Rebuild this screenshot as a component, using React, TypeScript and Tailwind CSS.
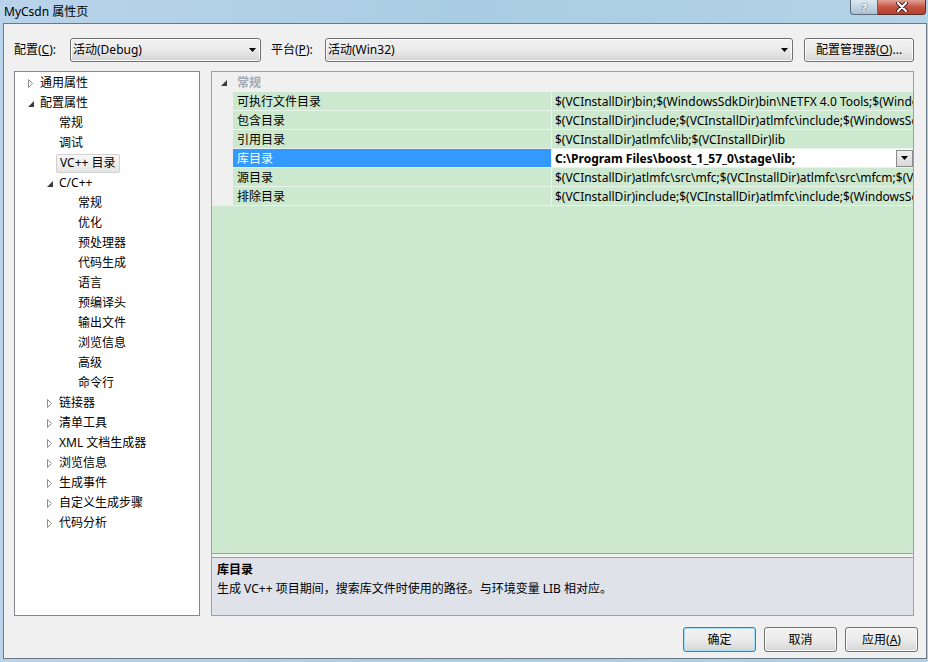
import type { ReactNode } from 'react';

type Arrow = 'open' | 'closed' | undefined;

interface TreeNode {
  label: string;
  level: 0 | 1 | 2;
  arrow?: Arrow;
  selected?: boolean;
}

const tree: TreeNode[] = [
  { label: '通用属性', level: 0, arrow: 'closed' },
  { label: '配置属性', level: 0, arrow: 'open' },
  { label: '常规', level: 1 },
  { label: '调试', level: 1 },
  { label: 'VC++ 目录', level: 1, selected: true },
  { label: 'C/C++', level: 1, arrow: 'open' },
  { label: '常规', level: 2 },
  { label: '优化', level: 2 },
  { label: '预处理器', level: 2 },
  { label: '代码生成', level: 2 },
  { label: '语言', level: 2 },
  { label: '预编译头', level: 2 },
  { label: '输出文件', level: 2 },
  { label: '浏览信息', level: 2 },
  { label: '高级', level: 2 },
  { label: '命令行', level: 2 },
  { label: '链接器', level: 1, arrow: 'closed' },
  { label: '清单工具', level: 1, arrow: 'closed' },
  { label: 'XML 文档生成器', level: 1, arrow: 'closed' },
  { label: '浏览信息', level: 1, arrow: 'closed' },
  { label: '生成事件', level: 1, arrow: 'closed' },
  { label: '自定义生成步骤', level: 1, arrow: 'closed' },
  { label: '代码分析', level: 1, arrow: 'closed' },
];

const indent = ['pl-[9px]', 'pl-[28px]', 'pl-[47px]'];

const props = [
  {
    name: '可执行文件目录',
    value: '$(VCInstallDir)bin;$(WindowsSdkDir)bin\\NETFX 4.0 Tools;$(WindowsSdkDir)bin;$(VSInstallDir)Common7\\Tools\\bin;',
  },
  {
    name: '包含目录',
    value: '$(VCInstallDir)include;$(VCInstallDir)atlmfc\\include;$(WindowsSdkDir)include;$(FrameworkSDKDir)\\include;',
  },
  { name: '引用目录', value: '$(VCInstallDir)atlmfc\\lib;$(VCInstallDir)lib' },
  { name: '库目录', value: 'C:\\Program Files\\boost_1_57_0\\stage\\lib;', selected: true },
  {
    name: '源目录',
    value: '$(VCInstallDir)atlmfc\\src\\mfc;$(VCInstallDir)atlmfc\\src\\mfcm;$(VCInstallDir)atlmfc\\src\\atl;',
  },
  {
    name: '排除目录',
    value: '$(VCInstallDir)include;$(VCInstallDir)atlmfc\\include;$(WindowsSdkDir)include;$(FrameworkSDKDir)\\include;',
  },
];

function TreeArrow({ kind }: { kind: Arrow }) {
  if (kind === 'closed') {
    return (
      <svg width="7" height="9" viewBox="0 0 7 9">
        <path d="M1.5 0.5 L5.5 4.5 L1.5 8.5 Z" fill="#fff" stroke="#8e8f8f" strokeWidth="1" />
      </svg>
    );
  }
  if (kind === 'open') {
    return (
      <svg width="6" height="6" viewBox="0 0 6 6" className="mt-[1px]">
        <path d="M6 0 L6 6 L0 6 Z" fill="#3b3b3b" />
      </svg>
    );
  }
  return null;
}

function DownArrow() {
  return (
    <svg width="7" height="4" viewBox="0 0 7 4">
      <path d="M0 0 L7 0 L3.5 4 Z" fill="#000" />
    </svg>
  );
}

function Combo({ text, width }: { text: string; width: string }) {
  return (
    <div
      className={`${width} h-[24px] rounded-[3px] border border-[#707070] bg-gradient-to-b from-[#f2f2f2] via-[#eaeaea] to-[#d4d4d4] shadow-[inset_0_0_0_1px_#fbfbfb] flex items-center pl-[2px] pr-[4px]`}
    >
      <span className="flex-1">{text}</span>
      <DownArrow />
    </div>
  );
}

function WinButton({ children, focused, width }: { children: ReactNode; focused?: boolean; width: string }) {
  return (
    <div
      className={clsxLite(
        width,
        'h-[25px] rounded-[3px] border flex items-center justify-center bg-gradient-to-b from-[#f2f2f2] via-[#ebebeb] to-[#d6d6d6]',
        focused
          ? 'border-[#3c7fb1] shadow-[inset_0_0_0_1px_#a6e0f8]'
          : 'border-[#707070] shadow-[inset_0_0_0_1px_#fbfbfb]',
      )}
    >
      {children}
    </div>
  );
}

function clsxLite(...parts: string[]) {
  return parts.join(' ');
}

export default function App() {
  return (
    <div className="w-[928px] h-[662px] overflow-hidden flex flex-col bg-gradient-to-r from-[#b9d3ea] via-[#a9cde2] to-[#b3d2e6] text-[12px] text-black font-['Noto_Sans','Noto_Sans_CJK_SC',sans-serif]">
      {/* title bar */}
      <div className="relative h-[23px] shrink-0 flex items-center pl-[4px] leading-none">
        <span className="text-[12px]">MyCsdn 属性页</span>
        <div className="absolute right-[2px] top-0 flex">
          <div className="w-[28px] h-[15px] rounded-bl-[4px] border border-t-0 border-[#5b6b7a] bg-gradient-to-b from-[#dce8f2] to-[#a9c1d4] flex items-center justify-center">
            <span className="text-[11px] font-bold text-white leading-none [text-shadow:0_0_2px_#2a3a4a]">?</span>
          </div>
          <div className="w-[48px] h-[15px] rounded-br-[4px] border border-t-0 border-l-0 border-[#5b2a22] bg-gradient-to-b from-[#e0a196] via-[#c75442] to-[#b3412f] flex items-center justify-center">
            <svg width="12" height="10" viewBox="0 0 12 10">
              <path d="M2 1 L10 9 M10 1 L2 9" stroke="#3b1d18" strokeWidth="4" strokeLinecap="round" />
              <path d="M2 1 L10 9 M10 1 L2 9" stroke="#fff" strokeWidth="2.2" strokeLinecap="round" />
            </svg>
          </div>
        </div>
      </div>

      {/* client */}
      <div className="ml-[3px] w-[924px] h-[636px] shrink-0 border border-[#6d7885] bg-[#f0f0f0] flex flex-col pt-[14px] pl-[10px]">
        <div className="flex items-center h-[24px]">
          <span className="w-[56px]">
            配置(<u>C</u>):
          </span>
          <Combo text="活动(Debug)" width="w-[191px]" />
          <span className="ml-[10px] w-[54px]">
            平台(<u>P</u>):
          </span>
          <Combo text="活动(Win32)" width="w-[468px]" />
          <div className="ml-[11px] w-[110px] h-[24px] rounded-[3px] border border-[#707070] bg-gradient-to-b from-[#f2f2f2] via-[#ebebeb] to-[#d6d6d6] shadow-[inset_0_0_0_1px_#fbfbfb] flex items-center justify-center">
            配置管理器(<u>O</u>)...
          </div>
        </div>

        <div className="flex mt-[9px] h-[545px]">
          {/* tree */}
          <div className="w-[186px] h-full border border-[#828790] bg-white pt-[1px]">
            {tree.map((n, i) => (
              <div key={i} className={`h-[20px] flex items-center ${indent[n.level]}`}>
                <div className="w-[16px] flex items-center justify-center pr-[3px]">
                  <TreeArrow kind={n.arrow} />
                </div>
                {n.selected ? (
                  <span className="-ml-[3px] h-[19px] px-[3px] flex items-center rounded-[2px] border border-[#d2d2d2] bg-gradient-to-b from-[#f7f7f7] to-[#e5e5e5]">
                    {n.label}
                  </span>
                ) : (
                  <span>{n.label}</span>
                )}
              </div>
            ))}
          </div>

          {/* property grid */}
          <div className="ml-[11px] w-[703px] h-full border border-[#a0a0a0] flex flex-col">
            <div className="h-[20px] shrink-0 flex items-center bg-[#f0f0f0] pt-[1px]">
              <div className="w-[21px] flex justify-center pl-[2px]">
                <TreeArrow kind="open" />
              </div>
              <span className="pl-[4px] text-[#a3a9b4] font-semibold">常规</span>
            </div>
            {props.map((p, i) => (
              <div key={i} className="h-[19px] shrink-0 flex">
                <div className="w-[21px] bg-[#f0f0f0]" />
                <div
                  className={`w-[319px] h-full border-b border-r border-[#e8f3ea] flex items-center pl-[4px] pt-[1px] ${
                    p.selected ? 'bg-[#3399ff] text-white' : 'bg-[#cce8cf]'
                  }`}
                >
                  {p.name}
                </div>
                <div
                  className={`flex-1 min-w-0 h-full border-b border-[#e8f3ea] flex items-center pl-[3px] overflow-hidden whitespace-nowrap ${
                    p.selected ? 'bg-white font-bold' : 'bg-[#cce8cf]'
                  }`}
                >
                  <span className="flex-1 min-w-0 overflow-hidden pt-[1px]">{p.value}</span>
                  {p.selected && (
                    <div className="w-[17px] h-[17px] shrink-0 border border-[#8a8a8a] bg-gradient-to-b from-[#f0f0f0] to-[#d8d8d8] flex items-center justify-center">
                      <DownArrow />
                    </div>
                  )}
                </div>
              </div>
            ))}
            <div className="flex-1 bg-[#cce8cf]" />
            <div className="h-[5px] shrink-0 border-t border-b border-[#a0a0a0] bg-[#f0f0f0]" />
            <div className="h-[57px] shrink-0 bg-[#dfe2e9] pl-[5px] pt-[2px]">
              <div className="h-[19px] flex items-center font-bold">库目录</div>
              <div className="h-[19px] flex items-center">
                生成 VC++ 项目期间，搜索库文件时使用的路径。与环境变量 LIB 相对应。
              </div>
            </div>
          </div>
        </div>

        <div className="flex justify-end gap-[8px] pr-[8px] mt-[11px]">
          <WinButton width="w-[73px]" focused>
            确定
          </WinButton>
          <WinButton width="w-[73px]">取消</WinButton>
          <WinButton width="w-[73px]">
            应用(<u>A</u>)
          </WinButton>
        </div>
      </div>
    </div>
  );
}
